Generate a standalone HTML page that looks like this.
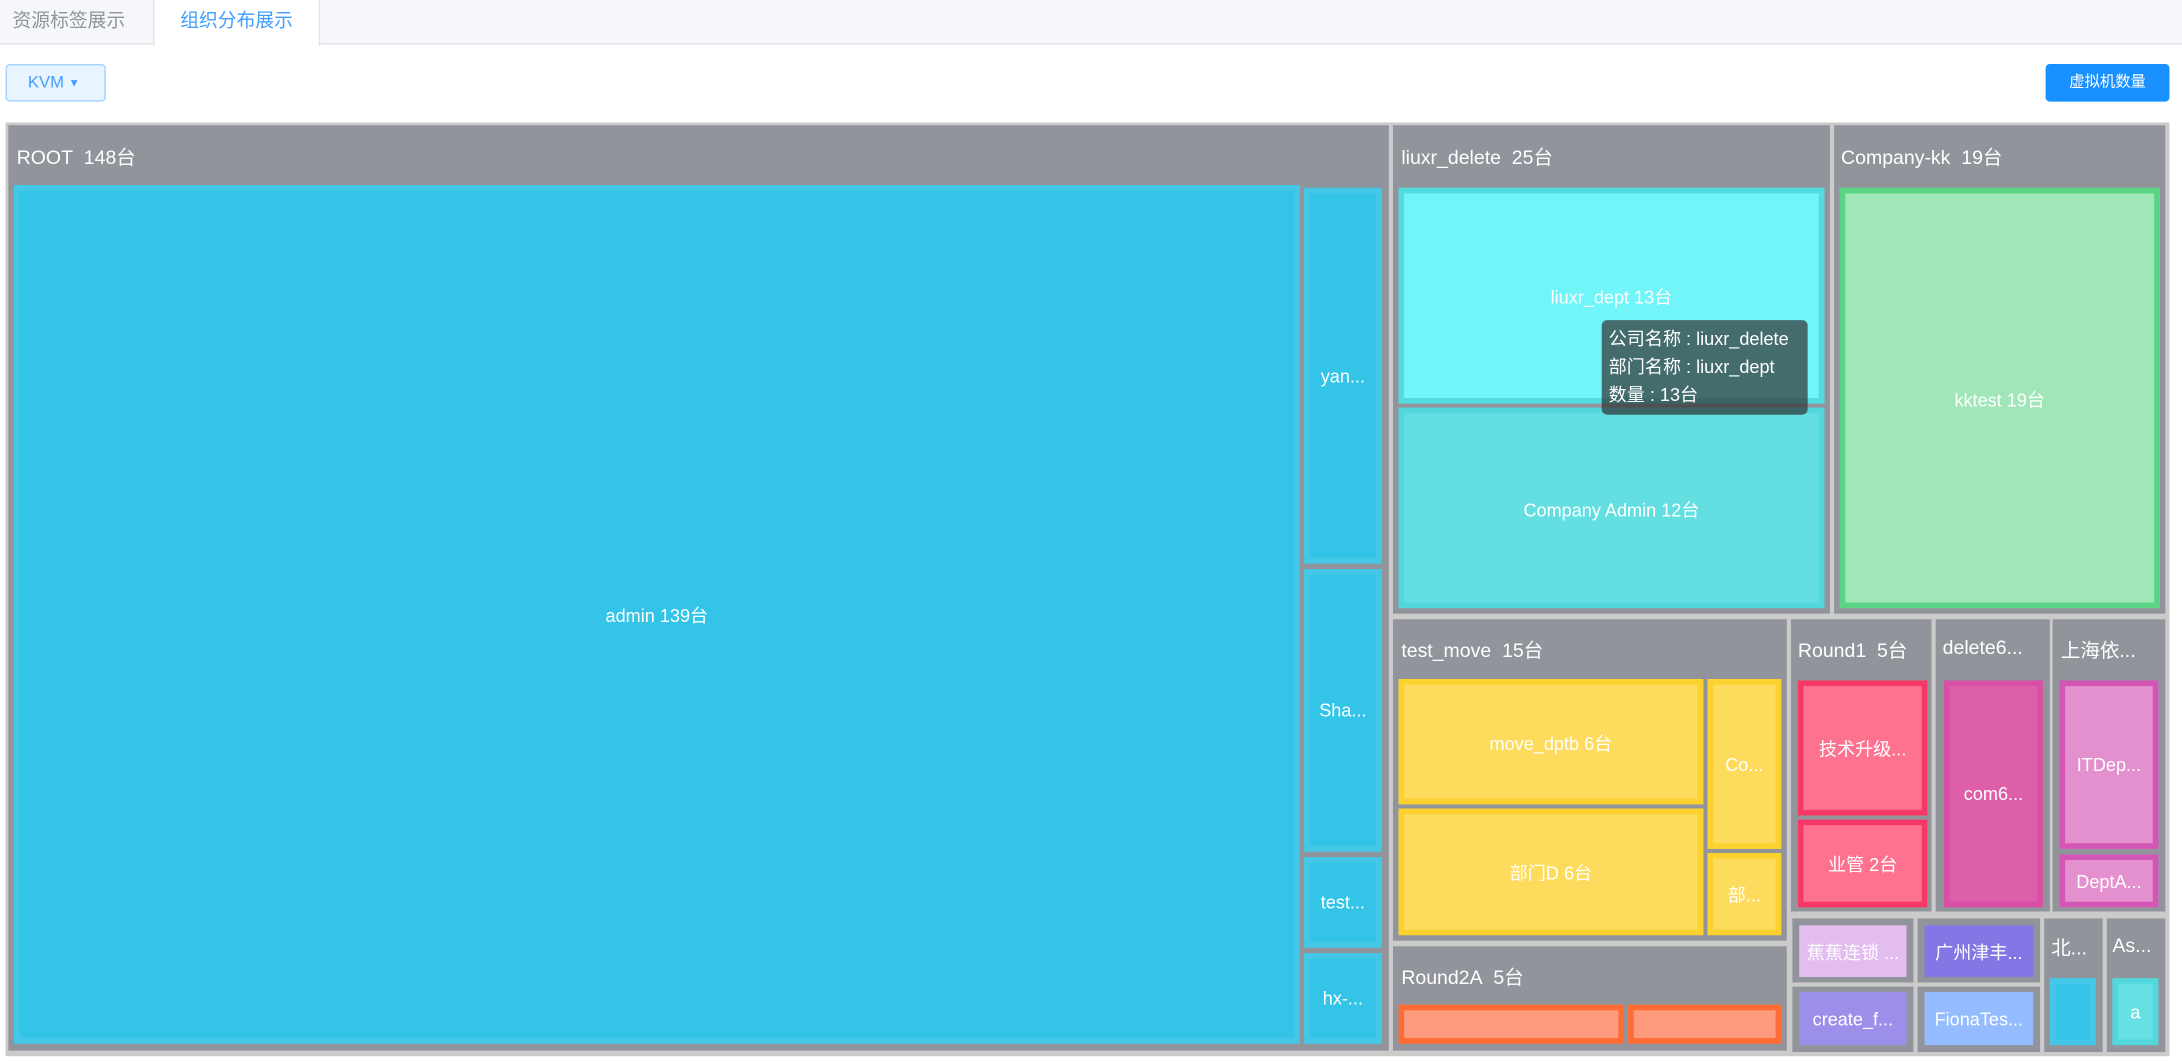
<!DOCTYPE html>
<html><head><meta charset="utf-8">
<style>
html,body{margin:0;padding:0;width:2182px;height:1061px;overflow:hidden;background:#fff;}
#w{position:absolute;left:0;top:0;width:1568px;height:762px;transform:scale(1.39158);transform-origin:0 0;font-family:"Liberation Sans","Noto Sans CJK SC",sans-serif;}
.a{position:absolute;box-sizing:border-box;}
.g{position:absolute;background:#91949b;}
.gl{position:absolute;color:#fff;font-size:14px;white-space:nowrap;}
.c{position:absolute;box-sizing:border-box;border:4px solid;display:flex;align-items:center;justify-content:center;color:#fff;font-size:13px;white-space:nowrap;overflow:hidden;}
.cy{border-color:#45c8e8;background:#33c4e8;}
.ye{border-color:#fdd22e;background:#fddb5c;}
.rd{border-color:#f73866;background:#fd728f;}
.or{border-color:#ff6b35;background:#fd9b7c;}
</style></head><body>
<div id="w">
<!-- tabs -->
<div class="a" style="left:0;top:0;width:1568px;height:32px;background:#f5f7fa;border-bottom:1px solid #e1e4ea;"></div>
<div class="a" style="left:0;top:0;width:110px;height:32px;color:#909399;font-size:13.5px;line-height:30px;padding-left:9px;">资源标签展示</div>
<div class="a" style="left:110px;top:0;width:120px;height:33px;background:#fff;border-left:1px solid #e1e4ea;border-right:1px solid #e1e4ea;color:#409eff;font-size:13.5px;line-height:30px;text-align:center;">组织分布展示</div>
<!-- buttons -->
<div class="a" style="left:4px;top:46px;width:72px;height:27px;background:#e8f4ff;border:1px solid #a3d0fd;border-radius:3px;color:#409eff;font-size:12px;line-height:25px;padding-left:15px;">KVM <span style="font-size:8px;position:relative;top:-1px;">&#9660;</span></div>
<div class="a" style="left:1470px;top:46px;width:89px;height:27px;background:#1890ff;border-radius:3px;color:#fff;font-size:11px;line-height:27px;text-align:center;">虚拟机数量</div>
<!-- treemap frame -->
<div class="a" style="left:4px;top:88px;width:1555px;height:671px;background:#cbcbcb;"></div>

<!-- ROOT -->
<div class="g" style="left:6px;top:90px;width:992px;height:665px;"></div>
<div class="gl" style="left:12px;top:103px;">ROOT&nbsp; 148台</div>
<div class="c cy" style="left:10px;top:133px;width:924px;height:617px;">admin 139台</div>
<div class="c cy" style="left:937px;top:135px;width:56px;height:270px;">yan...</div>
<div class="c cy" style="left:937px;top:409px;width:56px;height:203px;">Sha...</div>
<div class="c cy" style="left:937px;top:616px;width:56px;height:65px;">test...</div>
<div class="c cy" style="left:937px;top:685px;width:56px;height:65px;">hx-...</div>

<!-- liuxr_delete -->
<div class="g" style="left:1001px;top:90px;width:314px;height:351px;"></div>
<div class="gl" style="left:1007px;top:103px;">liuxr_delete&nbsp; 25台</div>
<div class="c" style="left:1005px;top:135px;width:306px;height:155px;border-color:#52dbe0;background:#70f6f8;">liuxr_dept 13台</div>
<div class="c" style="left:1005px;top:293px;width:306px;height:144px;border-color:#52d8dc;background:#63dfe2;">Company Admin 12台</div>

<!-- Company-kk -->
<div class="g" style="left:1318px;top:90px;width:238px;height:351px;"></div>
<div class="gl" style="left:1323px;top:103px;">Company-kk&nbsp; 19台</div>
<div class="c" style="left:1322px;top:135px;width:230px;height:302px;border-color:#5ad585;background:#a1e6b9;">kktest 19台</div>

<!-- test_move -->
<div class="g" style="left:1001px;top:445px;width:283px;height:231px;"></div>
<div class="gl" style="left:1007px;top:457px;">test_move&nbsp; 15台</div>
<div class="c ye" style="left:1005px;top:488px;width:219px;height:90px;">move_dptb 6台</div>
<div class="c ye" style="left:1005px;top:581px;width:219px;height:91px;">部门D 6台</div>
<div class="c ye" style="left:1227px;top:488px;width:53px;height:122px;">Co...</div>
<div class="c ye" style="left:1227px;top:613px;width:53px;height:59px;">部...</div>

<!-- Round2A -->
<div class="g" style="left:1001px;top:680px;width:283px;height:75px;"></div>
<div class="gl" style="left:1007px;top:692px;">Round2A&nbsp; 5台</div>
<div class="c or" style="left:1005px;top:722px;width:162px;height:28px;"></div>
<div class="c or" style="left:1170px;top:722px;width:110px;height:28px;"></div>

<!-- Round1 -->
<div class="g" style="left:1287px;top:445px;width:101px;height:210px;"></div>
<div class="gl" style="left:1292px;top:457px;">Round1&nbsp; 5台</div>
<div class="c rd" style="left:1292px;top:489px;width:93px;height:97px;">技术升级...</div>
<div class="c rd" style="left:1292px;top:589px;width:93px;height:63px;">业管 2台</div>

<!-- delete6 -->
<div class="g" style="left:1391px;top:445px;width:82px;height:210px;"></div>
<div class="gl" style="left:1396px;top:457px;">delete6...</div>
<div class="c" style="left:1397px;top:489px;width:71px;height:163px;border-color:#d94fa5;background:#dd5fa9;">com6...</div>

<!-- 上海依 -->
<div class="g" style="left:1475px;top:445px;width:81px;height:210px;"></div>
<div class="gl" style="left:1481px;top:457px;">上海依...</div>
<div class="c" style="left:1480px;top:489px;width:71px;height:121px;border-color:#d356b7;background:#e48fce;">ITDep...</div>
<div class="c" style="left:1480px;top:614px;width:71px;height:38px;border-color:#d356b7;background:#e48fce;">DeptA...</div>

<!-- small groups -->
<div class="g" style="left:1288px;top:660px;width:87px;height:46px;"></div>
<div class="c" style="left:1293px;top:665px;width:77px;height:37px;border-color:#e3bdf0;background:#e3bdf0;">蕉蕉连锁 ...</div>
<div class="g" style="left:1378px;top:660px;width:88px;height:46px;"></div>
<div class="c" style="left:1383px;top:665px;width:78px;height:37px;border-color:#8277e5;background:#8277e5;">广州津丰...</div>
<div class="g" style="left:1288px;top:709px;width:87px;height:47px;"></div>
<div class="c" style="left:1293px;top:713px;width:77px;height:38px;border-color:#9b8fea;background:#9b8fea;">create_f...</div>
<div class="g" style="left:1378px;top:709px;width:88px;height:47px;"></div>
<div class="c" style="left:1383px;top:713px;width:78px;height:38px;border-color:#94bcff;background:#94bcff;">FionaTes...</div>

<div class="g" style="left:1469px;top:660px;width:42px;height:96px;"></div>
<div class="gl" style="left:1474px;top:671px;">北...</div>
<div class="c cy" style="left:1473px;top:703px;width:33px;height:48px;"></div>
<div class="g" style="left:1514px;top:660px;width:42px;height:96px;"></div>
<div class="gl" style="left:1518px;top:671px;">As...</div>
<div class="c" style="left:1518px;top:703px;width:33px;height:48px;border-color:#52d8dc;background:#66e0e3;">a</div>

<!-- tooltip -->
<div class="a" style="left:1151px;top:230px;width:148px;height:68px;background:rgba(50,50,50,0.7);border-radius:4px;color:#fff;font-size:13px;line-height:20px;padding:4px 0 0 5px;white-space:nowrap;">公司名称 : liuxr_delete<br>部门名称 : liuxr_dept<br>数量 : 13台</div>
</div>
</body></html>
